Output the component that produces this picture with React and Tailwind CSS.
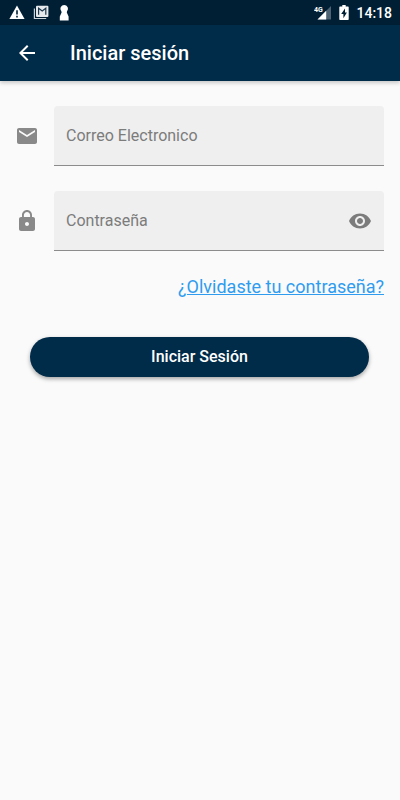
import { useState } from "react";

function Icon({ children, className = "" }) {
  return (
    <svg viewBox="0 0 24 24" fill="currentColor" aria-hidden="true" className={`size-6 shrink-0 ${className}`}>
      {children}
    </svg>
  );
}

function StatusBar() {
  return (
    <div className="flex h-[25px] items-center justify-between bg-[#001f35] pl-[9px] pr-2 text-white">
      <div className="flex items-center gap-2">
        <svg viewBox="0 0 16 16" className="size-4">
          <path fill="#fff" d="M8 .6 15.600 14H.4Z" />
          <path fill="#001f35" d="M7.200 5.200h1.600v4.300H7.200zM7.200 10.800h1.600v1.600H7.200z" />
        </svg>
        <svg viewBox="0 0 16 16" className="size-4">
          <path fill="none" stroke="#c9d1d7" strokeWidth="1.200" d="M1.400 3.500v10h11.800" />
          <rect x="3" y=".8" width="12.400" height="11.200" rx="1" fill="#e5e9ec" />
          <path fill="none" stroke="#1b364a" strokeWidth="1.200" d="M5.600 9.800V3.200l3.600 2.800 3.600-2.800v6.600" />
        </svg>
        <svg viewBox="0 0 16 16" className="size-4">
          <path fill="#fff" d="M7.200 0a3.700 3.700 0 0 1 2.900 6L9.800 7.400l1.800 4.200v4H2.800v-4l1.800-4.200L4.300 6A3.700 3.700 0 0 1 7.200 0Z" />
        </svg>
      </div>
      <div className="flex items-center">
        <svg viewBox="0 0 18 16" className="mr-[7px] h-4 w-[18px]">
          <path fill="#4d6272" d="M17 1v13.500H3.500Z" />
          <path fill="#fff" d="M12.200 5.800v8.700H3.500Z" />
          <text x="0" y="7" fill="#fff" stroke="#001f35" strokeWidth="1" paintOrder="stroke" className="font-['Roboto',sans-serif] text-[7px] font-bold">4G</text>
        </svg>
        <svg viewBox="0 0 10 16" className="mr-[7px] h-4 w-[10px]">
          <path fill="#fff" d="M3.300 0h3.400v1.500H9a.7.7 0 0 1 .7.7v12.100a.7.7 0 0 1-.7.700H1a.7.7 0 0 1-.7-.7V2.200A.7.7 0 0 1 1 1.500h2.300Z" />
          <path fill="#001f35" d="M6 3.500 2.200 9h2.200v4.200L7.900 7.500H6Z" />
        </svg>
        <span className="text-sm font-medium">14:18</span>
      </div>
    </div>
  );
}

function Field({ id, label, type, icon, children }) {
  return (
    <div className="flex items-center gap-[15px]">
      <label htmlFor={id} aria-label={label} className="text-[#898989]">
        {icon}
      </label>
      <div className="flex h-[60px] min-w-0 flex-1 items-center rounded-t border-b border-[#8c8c8c] bg-[#efefef] px-3">
        <input
          id={id}
          type={type}
          placeholder={label}
          className="h-full min-w-0 flex-1 bg-transparent text-base text-[#333] outline-none placeholder:text-[#7c7c7c]"
        />
        {children}
      </div>
    </div>
  );
}

export default function App() {
  const [visible, setVisible] = useState(false);
  return (
    <div className="min-h-screen bg-[#fafafa] font-['Roboto',sans-serif]">
      <StatusBar />
      <header className="flex h-14 items-center gap-[31px] bg-[#002b49] px-[15px] text-white shadow-[0_2px_4px_rgba(0,0,0,0.2)]">
        <button type="button" aria-label="Volver" className="flex">
          <Icon>
            <path d="M20 11H7.830l5.590-5.590L12 4l-8 8 8 8 1.410-1.410L7.830 13H20v-2z" />
          </Icon>
        </button>
        <h1 className="text-xl font-medium">Iniciar sesión</h1>
      </header>
      <form className="flex flex-col pl-[15px] pr-4 pt-[25px]" onSubmit={(e) => e.preventDefault()}>
        <div className="flex flex-col gap-[25px]">
          <Field
            id="email"
            label="Correo Electronico"
            type="email"
            icon={
              <Icon>
                <path d="M20 4H4c-1.100 0-1.990.9-1.990 2L2 18c0 1.100.9 2 2 2h16c1.100 0 2-.9 2-2V6c0-1.100-.9-2-2-2zm0 4l-8 5-8-5V6l8 5 8-5v2z" />
              </Icon>
            }
          />
          <Field
            id="password"
            label="Contraseña"
            type={visible ? "text" : "password"}
            icon={
              <Icon>
                <path d="M18 8h-1V6c0-2.760-2.240-5-5-5S7 3.240 7 6v2H6c-1.100 0-2 .9-2 2v10c0 1.100.9 2 2 2h12c1.100 0 2-.9 2-2V10c0-1.100-.9-2-2-2zm-6 9c-1.100 0-2-.9-2-2s.9-2 2-2 2 .9 2 2-.9 2-2 2zm3.100-9H8.900V6c0-1.710 1.390-3.100 3.100-3.100 1.710 0 3.100 1.390 3.100 3.100v2z" />
              </Icon>
            }
          >
            <button
              type="button"
              aria-label="Mostrar contraseña"
              className="flex text-[#7c7c7c]"
              onClick={() => setVisible(!visible)}
            >
              <Icon>
                <path d="M12 4.500C7 4.500 2.730 7.610 1 12c1.730 4.390 6 7.500 11 7.500s9.270-3.110 11-7.500c-1.730-4.390-6-7.500-11-7.500zM12 17c-2.760 0-5-2.240-5-5s2.240-5 5-5 5 2.240 5 5-2.240 5-5 5zm0-8c-1.660 0-3 1.340-3 3s1.340 3 3 3 3-1.340 3-3-1.340-3-3-3z" />
              </Icon>
            </button>
          </Field>
        </div>
        <a href="#recuperar" className="mt-[22px] self-end text-lg text-[#2f9cf0] underline">
          ¿Olvidaste tu contraseña?
        </a>
        <button
          type="submit"
          className="mx-[15px] mt-9 h-10 rounded-full bg-[#002b49] text-base font-medium text-white shadow-[0_2px_4px_rgba(0,0,0,0.35)]"
        >
          Iniciar Sesión
        </button>
      </form>
    </div>
  );
}
